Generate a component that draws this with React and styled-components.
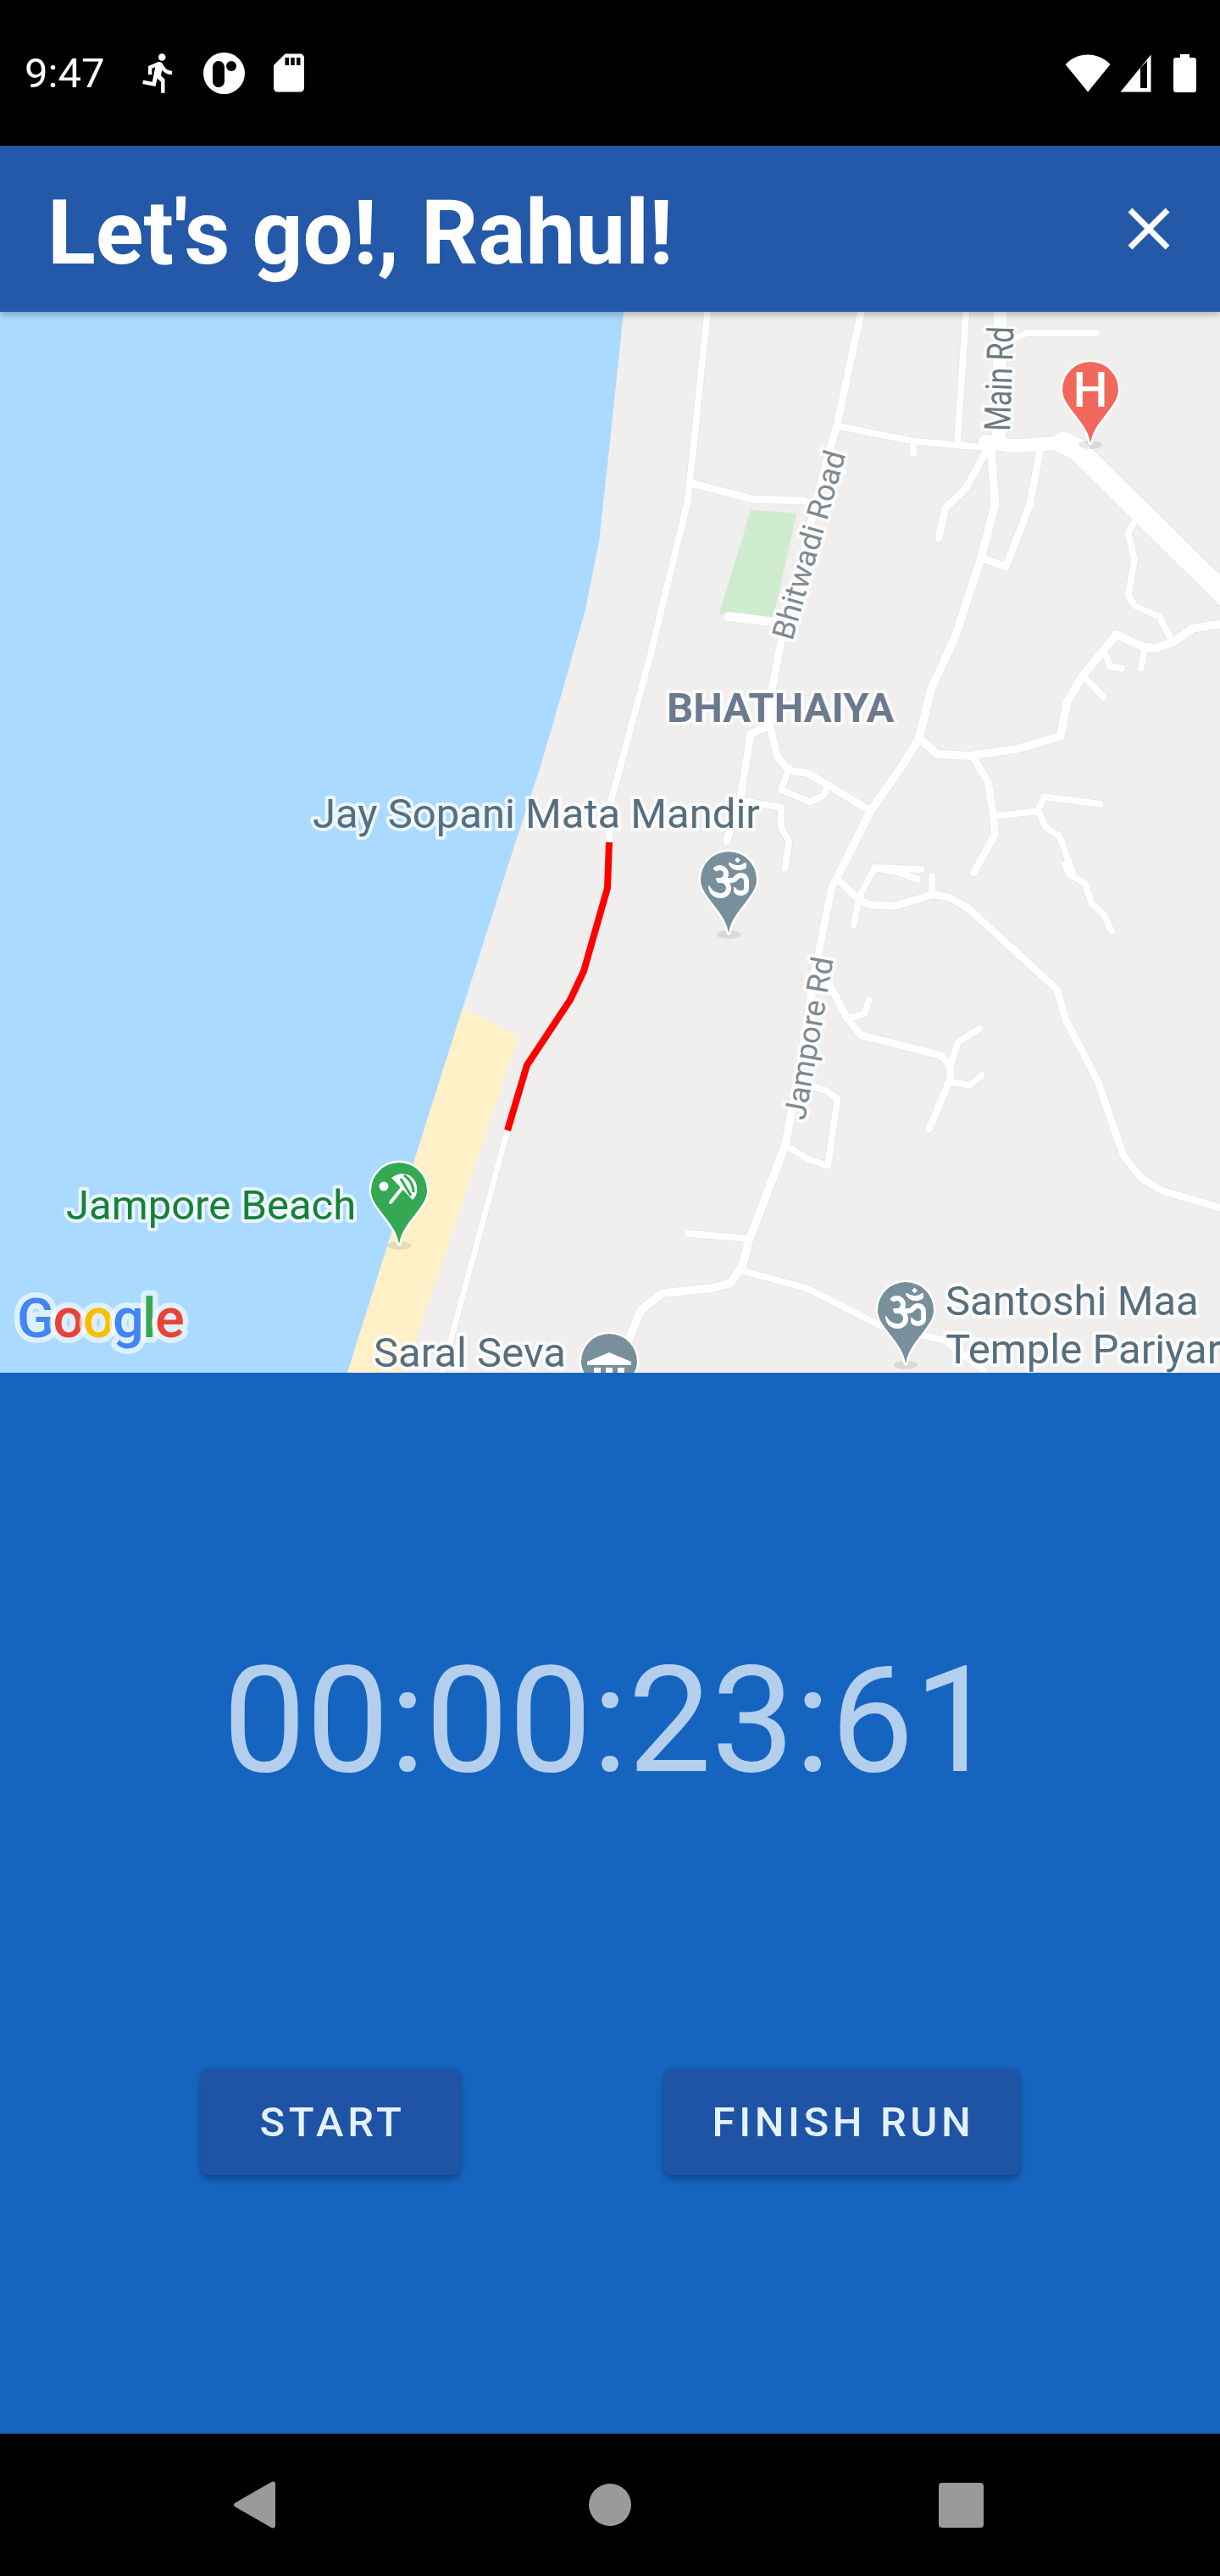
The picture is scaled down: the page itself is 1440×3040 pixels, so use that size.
import React from 'react'
import styled, { createGlobalStyle } from 'styled-components'
import { MdClose, MdDirectionsRun, MdSdCard } from 'react-icons/md'
import { FaOm } from 'react-icons/fa'

const GlobalStyle = createGlobalStyle`
  html, body { margin: 0; padding: 0; background: #000; }
  * { box-sizing: border-box; }
  body { font-family: Roboto, "Liberation Sans", sans-serif; }
`

const Screen = styled.div`
  width: 1440px;
  height: 3040px;
  display: flex;
  flex-direction: column;
  overflow: hidden;
`

const StatusBar = styled.div`
  height: 172px;
  background: #000;
  color: #fff;
  display: flex;
  align-items: center;
  justify-content: space-between;
  padding: 0 28px 0 29px;
`

const StatusGroup = styled.div`
  display: flex;
  align-items: center;
`

const Clock = styled.span`
  font-size: 49px;
  font-weight: 400;
  margin-right: 39px;
`

const StatusSlot = styled.span`
  display: flex;
  margin-left: ${p => p.$ml || 0}px;
`

const AppBar = styled.header`
  height: 196px;
  background: #2459a9;
  color: #fff;
  display: flex;
  align-items: center;
  justify-content: space-between;
  padding: 0 42px 0 56px;
  box-shadow: 0 3px 8px rgba(0, 0, 0, 0.28);
  position: relative;
  z-index: 2;
`

const Title = styled.h1`
  margin: 0;
  font-size: 105px;
  font-weight: 700;
  line-height: 1;
  position: relative;
  top: 5px;
`

const MapFrame = styled.div`
  height: 1252px;
  background: #f0efed;
  svg { display: block; }
`

const Label = styled.text`
  font-family: Roboto, "Liberation Sans", sans-serif;
  font-size: ${p => p.$size || 49}px;
  font-weight: ${p => p.$weight || 400};
  fill: ${p => p.$color || '#566f7e'};
  stroke: ${p => p.$halo || 'rgba(255, 255, 255, 0.75)'};
  stroke-width: ${p => p.$haloWidth || 8}px;
  stroke-linejoin: round;
  paint-order: stroke;
`

const RoadLine = styled.path`
  fill: none;
  stroke: ${p => p.$color};
  stroke-width: ${p => p.$w}px;
  stroke-linecap: ${p => p.$cap || 'round'};
  stroke-linejoin: round;
`

const Panel = styled.main`
  height: 1252px;
  background: #1565c0;
  display: flex;
  flex-direction: column;
  align-items: center;
  padding-top: 331px;
`

const Timer = styled.div`
  font-size: 175px;
  line-height: 160px;
  font-weight: 400;
  color: #b4cfee;
`

const ButtonRow = styled.div`
  width: 100%;
  margin-top: 330px;
  padding-left: 237px;
  display: flex;
  gap: 239px;
`

const ActionButton = styled.button`
  width: ${p => p.$w}px;
  height: 126px;
  border: 0;
  padding: 0 0 0 4px;
  border-radius: 11px;
  background: #1f53a6;
  color: #e3f2fd;
  font-family: Roboto, "Liberation Sans", sans-serif;
  font-size: 49px;
  font-weight: 500;
  letter-spacing: 4.6px;
  text-transform: uppercase;
  box-shadow: 0 6px 8px rgba(0, 0, 0, 0.22), 0 1px 4px rgba(0, 0, 0, 0.14);
`

const NavBar = styled.nav`
  height: 168px;
  background: #000;
  display: flex;
  align-items: center;
  padding-left: 276px;
`

const NavIcon = styled.svg`
  margin-left: ${p => p.$ml || 0}px;
  fill: #9a9a9a;
`

// zoom crops were read off by eye, these put them back into page coordinates
const fromNorth = ([x, y]) => [720 + x / 2.178, 370 + y / 2.376]
const fromSouth = ([x, y]) => [720 + x / 2.178, 1020 + y / 2.529]
const toPath = pts => 'M' + pts.map(p => p[0].toFixed(1) + ' ' + p[1].toFixed(1)).join('L')

const northRoads = [
  [9, [[645, 0], [583, 315], [555, 420], [440, 920], [415, 1060], [410, 1150], [430, 1240], [458, 1280], [510, 1290], [670, 1395]]],
  [9, [[410, 1155], [362, 1178], [335, 1360], [300, 1480]]],
  [8, [[583, 315], [780, 358], [960, 375]]],
  [8, [[780, 358], [780, 392]]],
  [16, [[1003, 0], [1000, 350]]],
  [8, [[915, 0], [893, 360]]],
  [8, [[1030, 75], [1070, 55], [1250, 55]]],
  [16, [[965, 358], [1035, 372], [1165, 362]]],
  [26, [[1165, 362], [1200, 380], [1590, 800]]],
  [9, [[970, 380], [915, 490], [862, 545], [845, 630]]],
  [10, [[980, 380], [990, 535], [955, 680], [890, 900], [825, 1055], [795, 1190], [750, 1270], [670, 1395], [590, 1568]]],
  [9, [[1105, 390], [1078, 540], [1018, 710], [960, 688]]],
  [9, [[205, 475], [365, 520], [500, 525]]],
  [11, [[305, 850], [420, 865]]],
  [9, [[560, 430], [600, 445]]],
  [8, [[1345, 590], [1332, 615], [1348, 690], [1332, 790], [1350, 820], [1412, 850], [1445, 920]]],
  [10, [[1590, 867], [1498, 883], [1450, 920], [1405, 938], [1370, 935], [1302, 900], [1215, 1015], [1175, 1090], [1158, 1185], [1050, 1220], [925, 1240], [840, 1235], [795, 1190]]],
  [8, [[1275, 960], [1285, 990], [1315, 995]]],
  [8, [[1225, 1025], [1268, 1075]]],
  [8, [[1375, 940], [1365, 995]]],
  [9, [[935, 1245], [972, 1315], [985, 1405], [990, 1460], [935, 1568]]],
  [8, [[985, 1410], [1100, 1395], [1115, 1355], [1260, 1375]]],
  [8, [[1100, 1395], [1120, 1440], [1155, 1465], [1190, 1568]]],
  [8, [[460, 1275], [440, 1335], [515, 1370], [550, 1350], [560, 1320]]],
  [8, [[335, 1365], [440, 1385], [440, 1440], [460, 1480], [450, 1555]]]
]

const southRoads = [
  [9, [[600, 0], [570, 70], [530, 300], [565, 360], [610, 460], [645, 510], [850, 570], [875, 600], [875, 640], [820, 790]]],
  [10, [[530, 300], [490, 600], [460, 780], [450, 840], [355, 1130], [340, 1200], [310, 1250], [260, 1265], [135, 1280], [80, 1330], [40, 1440]]],
  [9, [[590, 50], [640, 105], [665, 120], [730, 125], [830, 90], [875, 100], [925, 135], [1150, 375], [1170, 460], [1255, 650], [1320, 870], [1365, 935], [1420, 975], [1600, 1035]]],
  [8, [[680, 10], [640, 100], [627, 180]]],
  [8, [[680, 10], [745, 25], [790, 45]]],
  [8, [[680, 10], [800, 15]]],
  [8, [[828, 35], [828, 90]]],
  [8, [[615, 460], [655, 445], [665, 405]]],
  [8, [[875, 600], [895, 530], [950, 490]]],
  [8, [[880, 650], [925, 660], [955, 630]]],
  [8, [[460, 845], [510, 880], [560, 900], [585, 700], [555, 675], [500, 655]]],
  [8, [[200, 1102], [360, 1118]]],
  [8, [[345, 1215], [505, 1265], [700, 1380], [860, 1420], [960, 1510]]],
  [8, [[1170, 0], [1180, 30], [1220, 55], [1240, 120], [1270, 150], [1290, 200]]]
]

const westRoad = [[835, 368], [812, 590], [768, 772], [720, 950], [719, 994]]
const routeTail = [[599, 1334], [519, 1630]]
const route = [[719, 994], [717, 1048], [689, 1146], [673, 1180], [622, 1257], [599, 1334]]

const roads = [
  ...northRoads.map(([w, pts]) => [w, pts.map(fromNorth)]),
  ...southRoads.map(([w, pts]) => [w, pts.map(fromSouth)]),
  [8, westRoad],
  [8, route],
  [7, routeTail]
]

const PIN_SHAPE = 'M0 63C-3 46-12 38-22 24C-29 15-33 8-33 0A33 33 0 0 1 33 0C33 8 29 15 22 24C12 38 3 46 0 63Z'

function Pin({ x, y, color, children }) {
  return (
    <g transform={`translate(${x} ${y})`}>
      <ellipse cx="0" cy="65" rx="14" ry="5" fill="rgba(0,0,0,0.09)" />
      <path d={PIN_SHAPE} fill={color} stroke="#fff" strokeWidth="5" strokeLinejoin="round" paintOrder="stroke" />
      {children}
    </g>
  )
}

function MapView() {
  return (
    <svg width="1440" height="1252" viewBox="0 368 1440 1252">
      <rect x="0" y="368" width="1440" height="1252" fill="#f0efed" />
      <path d="M0 368L736 368L720 521L707 639L691 719L666 808L638 904L600 1020L546 1190L487 1376L410 1620L0 1620Z" fill="#aadaff" />
      <path d="M546 1190L612 1224L477 1620L410 1620L487 1376Z" fill="#fff0c8" />
      <path d={toPath([[362, 550], [480, 560], [420, 850], [280, 842]].map(fromNorth)) + 'Z'} fill="#cfeccf" />

      {roads.map(([w, pts], i) => (
        <RoadLine key={'e' + i} d={toPath(pts)} $w={w + 1.5} $color="#e2e3e6" />
      ))}
      {roads.map(([w, pts], i) => (
        <RoadLine key={'r' + i} d={toPath(pts)} $w={w} $color="#fff" />
      ))}
      <RoadLine d={toPath(route)} $w={8} $color="#f00" $cap="butt" />

      <Label x="369" y="977">Jay Sopani Mata Mandir</Label>
      <Label x="787" y="852" $size={49} $weight={700} $color="#6b7a8e">BHATHAIYA</Label>
      <Label $size={36} $color="#7f8a91" transform="translate(935 757) rotate(-74)">Bhitwadi Road</Label>
      <Label $size={43} $color="#6d7b83" textLength="123" lengthAdjust="spacingAndGlyphs" transform="translate(1192 509) rotate(-88)">Main Rd</Label>
      <Label $size={36} $color="#7f8a91" transform="translate(950 1323) rotate(-80)">Jampore Rd</Label>
      <Label x="78" y="1439" $color="#188038">Jampore Beach</Label>
      <Label x="441" y="1613">Saral Seva</Label>
      <Label x="1116" y="1552">Santoshi Maa</Label>
      <Label x="1116" y="1609">Temple Pariyar</Label>

      <Label x="20" y="1578" $size={65} $weight={500} $haloWidth={13} letterSpacing="-1.7" $halo="rgba(255,255,255,0.6)">
        <tspan fill="#4285f4">G</tspan>
        <tspan fill="#ea4335">o</tspan>
        <tspan fill="#fbbc05">o</tspan>
        <tspan fill="#4285f4">g</tspan>
        <tspan fill="#34a853">l</tspan>
        <tspan fill="#ea4335">e</tspan>
      </Label>

      <Pin x={1287} y={460} color="#f1695c">
        <text x="0" y="20" textAnchor="middle" fontFamily="Roboto, sans-serif" fontSize="58" fontWeight="500" fill="#fff">H</text>
      </Pin>
      <Pin x={860} y={1038} color="#78909c">
        <FaOm x={-24} y={-26} size={48} color="#fff" />
      </Pin>
      <Pin x={1069} y={1546} color="#78909c">
        <FaOm x={-24} y={-26} size={48} color="#fff" />
      </Pin>
      <Pin x={471} y={1405} color="#34a853">
        <circle cx="-18" cy="-5" r="5.5" fill="#fff" />
        <path d="M-10 14L6-6" stroke="#fff" strokeWidth="4" strokeLinecap="round" />
        <path d="M-9-15C2-24 18-20 21-5C22 2 20 7 16 11Z" fill="#fff" />
        <path d="M2-14L14 6M6-18C12-14 17-8 17 2" stroke="#34a853" strokeWidth="3" fill="none" />
      </Pin>
      <Pin x={719} y={1607} color="#78909c">
        <path d="M-26 0L0-11L26 0L26 4L-26 4ZM-18 7H-10V28H-18ZM-4 7H4V28H-4ZM10 7H18V28H10Z" fill="#fff" />
      </Pin>
    </svg>
  )
}

function PulseIcon() {
  return (
    <svg width="49" height="49" viewBox="0 0 49 49">
      <circle cx="24.5" cy="24.5" r="24.5" fill="#fff" />
      <rect x="11" y="10" width="14" height="31" rx="7" fill="#000" />
      <circle cx="33" cy="16" r="6" fill="#000" />
    </svg>
  )
}

function WifiIcon() {
  return (
    <svg width="54" height="45" viewBox="0 0 54 45">
      <path d="M27 44.5L0.5 12C8 4.5 17 0.5 27 0.5S46 4.5 53.5 12Z" fill="#fff" />
    </svg>
  )
}

function SignalIcon() {
  return (
    <svg width="37" height="45" viewBox="0 0 37 45">
      <path fillRule="evenodd" d="M36.5 0.5V44.5H0.5ZM24 16V40H32V8Z" fill="#fff" />
    </svg>
  )
}

function BatteryIcon() {
  return (
    <svg width="27" height="45" viewBox="0 0 27 45">
      <path d="M8 0H19V4H24C25.7 4 27 5.3 27 7V42C27 43.7 25.7 45 24 45H3C1.3 45 0 43.7 0 42V7C0 5.3 1.3 4 3 4H8Z" fill="#fff" />
    </svg>
  )
}

export default function App() {
  return (
    <Screen>
      <GlobalStyle />
      <StatusBar>
        <StatusGroup>
          <Clock>9:47</Clock>
          <MdDirectionsRun size={52} />
          <StatusSlot $ml={26}><PulseIcon /></StatusSlot>
          <StatusSlot $ml={25}><MdSdCard size={54} /></StatusSlot>
        </StatusGroup>
        <StatusGroup>
          <WifiIcon />
          <StatusSlot $ml={11}><SignalIcon /></StatusSlot>
          <StatusSlot $ml={26}><BatteryIcon /></StatusSlot>
        </StatusGroup>
      </StatusBar>

      <AppBar>
        <Title>Let's go!, Rahul!</Title>
        <MdClose size={84} />
      </AppBar>

      <MapFrame>
        <MapView />
      </MapFrame>

      <Panel>
        <Timer>00:00:23:61</Timer>
        <ButtonRow>
          <ActionButton $w={307}>Start</ActionButton>
          <ActionButton $w={421}>Finish Run</ActionButton>
        </ButtonRow>
      </Panel>

      <NavBar>
        <NavIcon width="49" height="56" viewBox="0 0 49 56">
          <path d="M46 0.5C47.7 0.5 49 1.8 49 3.5V52.5C49 54.2 47.7 55.5 46 55.5C45.2 55.5 44.5 55.2 44 54.7L1 30C-0.3 29 -0.3 27 1 26L44 1.3C44.5 0.8 45.2 0.5 46 0.5Z" />
        </NavIcon>
        <NavIcon $ml={370} width="50" height="50" viewBox="0 0 50 50">
          <circle cx="25" cy="25" r="25" />
        </NavIcon>
        <NavIcon $ml={363} width="53" height="53" viewBox="0 0 53 53">
          <rect width="53" height="53" rx="4" />
        </NavIcon>
      </NavBar>
    </Screen>
  )
}
